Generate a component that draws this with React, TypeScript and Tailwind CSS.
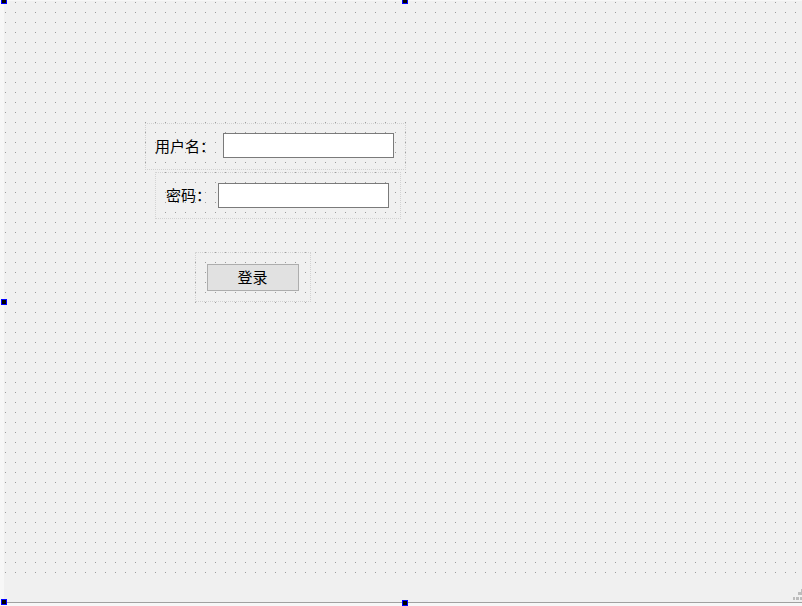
import React from 'react';

const font = { fontFamily: '"Noto Sans CJK SC", "Liberation Sans", sans-serif' };

// selection handle of the designer form
function Handle({ className }: { className: string }) {
  return <div className={`absolute h-[6px] w-[6px] border border-[#0000ff] bg-black ${className}`} />;
}

function SizeGrip() {
  return (
    <svg width="11" height="12" viewBox="0 0 11 12" className="mb-[1px]">
      <rect x="8" y="0" width="3" height="3" fill="#bcbcbc" />
      <rect x="5" y="3" width="3" height="3" fill="#bcbcbc" />
      <rect x="8" y="3" width="3" height="3" fill="#bcbcbc" />
      <rect x="0" y="8" width="2" height="3" fill="#bcbcbc" />
      <rect x="3" y="8" width="3" height="3" fill="#bcbcbc" />
      <rect x="7" y="8" width="4" height="3" fill="#bcbcbc" />
    </svg>
  );
}

export default function App() {
  return (
    <div className="relative h-[606px] w-[802px] overflow-hidden bg-[#f7f7f7] pl-[4px] pt-[1px]" style={font}>
      <div className="flex h-[602px] w-[800px] flex-col border-b border-[#a0a0a0] bg-[#f0f0f0]">
        {/* central widget with designer grid */}
        <div className="h-[576px] bg-[conic-gradient(at_1px_1px,transparent_75%,#9c9c9c_0)] bg-size-[10px_10px] bg-position-[1px_1px] pt-[122px]">
          {/* username row */}
          <div className="ml-[141px] flex h-[47px] w-[261px] items-center border border-dotted border-[#d2d2d2] pl-[9px]">
            <span className="mb-[2px] w-[68px] text-[15px] leading-none text-black">用户名：</span>
            <input className="mb-[2px] h-[25px] w-[171px] border border-[#7a7a7a] bg-white outline-none" />
          </div>
          {/* password row */}
          <div className="ml-[151px] mt-[2px] flex h-[47px] w-[246px] items-center border border-dotted border-[#d2d2d2] pl-[10px]">
            <span className="mb-[2px] w-[52px] text-[15px] leading-none text-black">密码：</span>
            <input type="password" className="h-[25px] w-[171px] border border-[#7a7a7a] bg-white outline-none" />
          </div>
          {/* button row */}
          <div className="ml-[191px] mt-[33px] flex h-[50px] w-[116px] items-center border border-dotted border-[#d2d2d2] pl-[11px]">
            <button className="h-[27px] w-[92px] border border-[#adadad] bg-[#e1e1e1] pb-[1px] pr-[1px] text-[15px] leading-none text-black">
              登录
            </button>
          </div>
        </div>
        {/* status bar */}
        <div className="flex flex-1 items-end justify-end">
          <SizeGrip />
        </div>
      </div>

      <Handle className="left-[1px] top-[-2px]" />
      <Handle className="left-[402px] top-[-2px]" />
      <Handle className="left-[1px] top-[299px]" />
      <Handle className="left-[1px] top-[599px]" />
      <Handle className="left-[402px] top-[600px]" />
    </div>
  );
}
